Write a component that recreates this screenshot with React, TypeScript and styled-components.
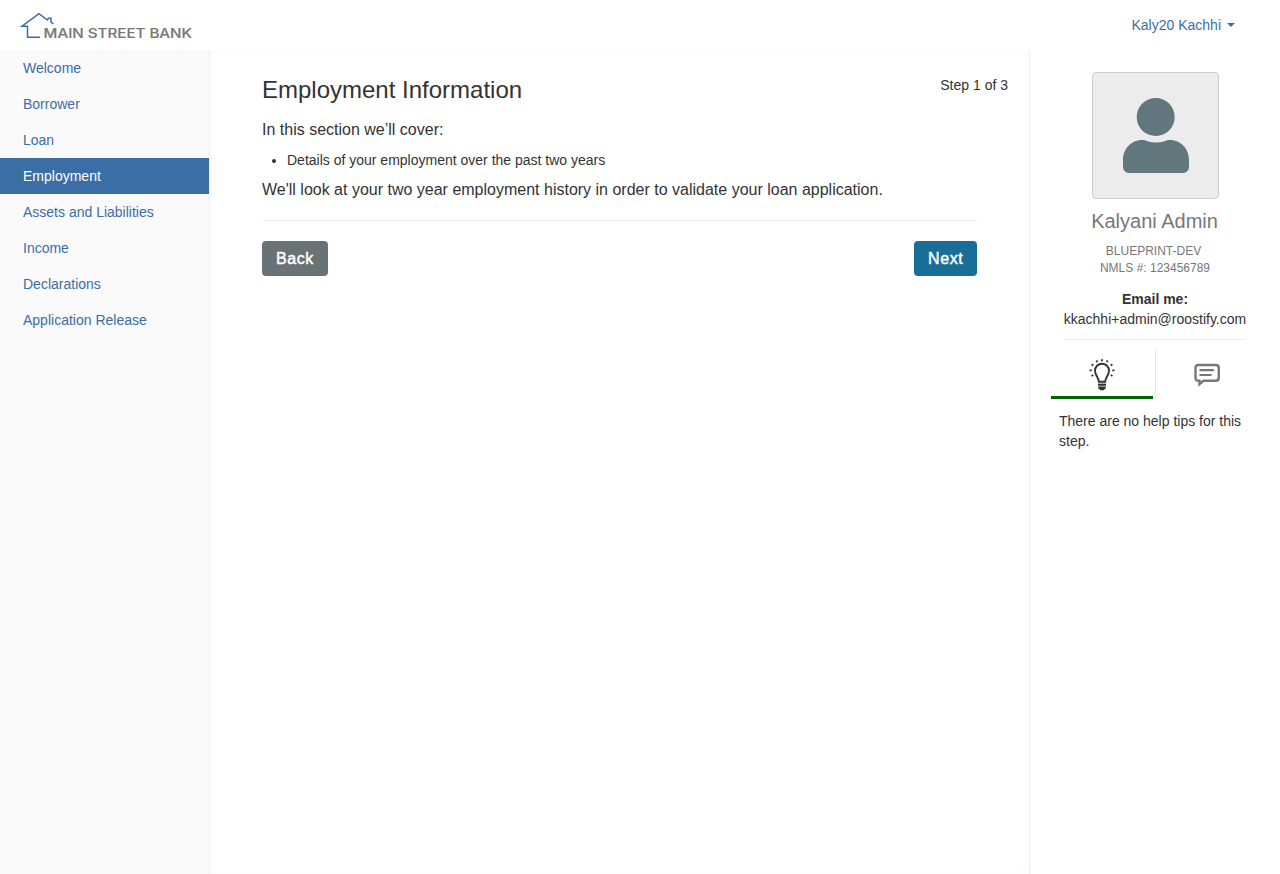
import React from "react";
import styled, { createGlobalStyle } from "styled-components";

const GlobalStyle = createGlobalStyle`
  *, *::before, *::after { box-sizing: border-box; }
  body {
    margin: 0;
    background: #fff;
    color: #333;
    font: 14px/20px "Liberation Sans", Arial, sans-serif;
    overflow: hidden;
  }
`;

const Page = styled.div`
  display: flex;
  flex-direction: column;
  height: 100vh;
`;

const Header = styled.header`
  display: flex;
  justify-content: space-between;
  height: 50px;
  padding: 0 45px 0 20px;
`;

const Logo = styled.svg`
  display: block;
  margin-top: 10px;
`;

const UserMenu = styled.a`
  display: flex;
  align-items: center;
  gap: 6px;
  height: 50px;
  color: #3a6ea5;
`;

const Caret = styled.span`
  border-top: 4px solid currentColor;
  border-left: 4px solid transparent;
  border-right: 4px solid transparent;
`;

const Columns = styled.div`
  display: flex;
  flex: 1;
`;

const Sidebar = styled.nav`
  width: 210px;
  background: #fafafa;
  border-right: 1px solid #eee;
`;

const NavItem = styled.a<{ $active?: boolean }>`
  display: block;
  padding: 8px 23px;
  color: ${(p) => (p.$active ? "#fff" : "#3a6ea5")};
  background: ${(p) => (p.$active ? "#3a6ea5" : "transparent")};
`;

const Main = styled.main`
  flex: 1;
  padding: 25px 21px 0 52px;
  box-shadow: inset 0 0 15px rgba(0, 0, 0, 0.015);
`;

const TitleRow = styled.div`
  display: flex;
  justify-content: space-between;
`;

const Title = styled.h1`
  margin: 0;
  font-size: 24px;
  font-weight: 400;
  line-height: 30px;
`;

const Lead = styled.p`
  margin: 0;
  font-size: 16px;
  line-height: 20px;
`;

const Intro = styled(Lead)`
  margin-top: 15px;
`;

const Topics = styled.ul`
  margin: 10px 0 10px;
  padding: 0 0 0 25px;
`;

const Actions = styled.div`
  display: flex;
  justify-content: space-between;
  width: 715px;
  margin-top: 20px;
  padding-top: 20px;
  border-top: 1px solid #eee;
`;

const Button = styled.button<{ $primary?: boolean }>`
  width: ${(p) => (p.$primary ? "63px" : "66px")};
  height: 35px;
  padding: 0 0 0 14px;
  border: 0;
  border-radius: 4px;
  color: #fff;
  background: ${(p) => (p.$primary ? "#176f98" : "#677375")};
  font: 16px/35px "Liberation Sans", Arial, sans-serif;
  letter-spacing: 0.6px;
  text-align: left;
  -webkit-text-stroke: 0.45px #fff;
`;

const Aside = styled.aside`
  width: 251px;
  border-left: 1px solid #eee;
  padding: 22px 25px 0 21px;
`;

const Profile = styled.section`
  display: flex;
  flex-direction: column;
  align-items: center;
  width: 180px;
  margin: 0 0 10px 14px;
  padding-bottom: 10px;
  border-bottom: 1px solid #eee;
  white-space: nowrap;
`;

const Avatar = styled.div`
  width: 127px;
  height: 127px;
  border: 1px solid #ccc;
  border-radius: 4px;
  background: #ececec;
`;

const Name = styled.h2`
  margin: 9px 0 9px;
  padding-right: 1px;
  color: #777;
  font-size: 20px;
  font-weight: 400;
  line-height: 26px;
`;

const Detail = styled.div<{ $nudge?: boolean }>`
  color: #777;
  font-size: 12px;
  line-height: 17px;
  padding-right: ${(p) => (p.$nudge ? "3px" : "0")};
`;

const EmailLabel = styled.strong`
  margin-top: 12px;
`;

const Tabs = styled.div`
  display: flex;
  height: 49px;
`;

const Tab = styled.div<{ $active?: boolean }>`
  display: flex;
  flex: none;
  justify-content: center;
  width: 102px;
  border-bottom: ${(p) => (p.$active ? "3px solid #006400" : "0")};
`;

const Divider = styled.div`
  flex: none;
  width: 1px;
  height: 48px;
  margin-left: 2px;
  background: #e5e5e5;
`;

const TabIcon = styled.svg<{ $top: number }>`
  flex: none;
  margin-top: ${(p) => p.$top}px;
`;

const Tip = styled.p`
  margin: 12px 0 0 8px;
  width: 190px;
`;

const steps = [
  "Welcome",
  "Borrower",
  "Loan",
  "Employment",
  "Assets and Liabilities",
  "Income",
  "Declarations",
  "Application Release",
];

function BankLogo() {
  return (
    <Logo width="176" height="32" viewBox="0 0 176 32">
      <path
        d="M20 27.2H7.5V16.2H2L19 3.7L27.3 10L28.4 8.3H31V12.2L33.4 13.8"
        fill="none"
        stroke="#3a6ea5"
        strokeWidth="1.5"
      />
      <text
        x="23.6"
        y="28"
        fill="#777"
        stroke="#777"
        strokeWidth="0.15"
        fontFamily="Inter, 'Liberation Sans', sans-serif"
        fontSize="12.5"
        fontWeight="500"
        textLength="148.4"
        lengthAdjust="spacingAndGlyphs"
      >
        MAIN STREET BANK
      </text>
    </Logo>
  );
}

function PersonIcon() {
  return (
    <svg width="125" height="125" viewBox="0 0 125 125" fill="#62777d">
      <circle cx="62.7" cy="44" r="19" />
      <path d="M49 67C51 67 52.5 67.3 54.5 68.2C60 69.9 66 69.9 71.5 68.2C73.5 67.3 75 67 77 67C88 67 96 76 96 87V93.5C96 97.5 93.3 100 89.5 100H36.5C32.7 100 30 97.5 30 93.5V87C30 76 38 67 49 67Z" />
    </svg>
  );
}

function BulbIcon() {
  return (
    <TabIcon $top={8} width="28" height="34" viewBox="0 0 28 34" fill="none" stroke="#333">
      <path
        d="M10.8 23.8C10.8 19.5 7 17.5 7 12.7C7 8.8 10.1 5.7 14 5.7S21 8.8 21 12.7C21 17.5 17.2 19.5 17.2 23.8Z"
        strokeWidth="1.9"
      />
      <path d="M10 26.7H18" strokeWidth="2.2" />
      <path d="M10 28.6H18L17.5 30.4L15.6 32.2H12.4L10.5 30.4Z" fill="#333" stroke="none" />
      <path
        d="M14 1.2V3.2M8.3 2.4L9.3 4.1M19.7 2.4L18.7 4.1M3.6 6.4L5.3 7.5M24.4 6.4L22.7 7.5M1.5 12.4H3.7M26.5 12.4H24.3M3.5 18L5.3 17M24.5 18L22.7 17"
        strokeWidth="1.9"
      />
    </TabIcon>
  );
}

function ChatIcon() {
  return (
    <TabIcon $top={13} width="28" height="26" viewBox="0 0 28 26" fill="none" stroke="#777">
      <path
        d="M5.5 2H22.8C24.8 2 25.8 3 25.8 5V14.8C25.8 16.8 24.8 17.8 22.8 17.8H10.4L6.5 21.2V17.8H5.5C3.5 17.8 2.5 16.8 2.5 14.8V5C2.5 3 3.5 2 5.5 2Z"
        strokeWidth="2.4"
      />
      <path d="M7.3 7.1H20.2M7.3 12H17.8" strokeWidth="2.2" strokeLinecap="round" />
    </TabIcon>
  );
}

export default function App() {
  return (
    <Page>
      <GlobalStyle />
      <Header>
        <BankLogo />
        <UserMenu>
          Kaly20 Kachhi <Caret />
        </UserMenu>
      </Header>
      <Columns>
        <Sidebar>
          {steps.map((step) => (
            <NavItem key={step} $active={step === "Employment"}>
              {step}
            </NavItem>
          ))}
        </Sidebar>
        <Main>
          <TitleRow>
            <Title>Employment Information</Title>
            <span>Step 1 of 3</span>
          </TitleRow>
          <Intro>In this section we’ll cover:</Intro>
          <Topics>
            <li>Details of your employment over the past two years</li>
          </Topics>
          <Lead>We'll look at your two year employment history in order to validate your loan application.</Lead>
          <Actions>
            <Button>Back</Button>
            <Button $primary>Next</Button>
          </Actions>
        </Main>
        <Aside>
          <Profile>
            <Avatar>
              <PersonIcon />
            </Avatar>
            <Name>Kalyani Admin</Name>
            <Detail $nudge>BLUEPRINT-DEV</Detail>
            <Detail>NMLS #: 123456789</Detail>
            <EmailLabel>Email me:</EmailLabel>
            <span>kkachhi+admin@roostify.com</span>
          </Profile>
          <Tabs>
            <Tab $active>
              <BulbIcon />
            </Tab>
            <Divider />
            <Tab>
              <ChatIcon />
            </Tab>
          </Tabs>
          <Tip>There are no help tips for this step.</Tip>
        </Aside>
      </Columns>
    </Page>
  );
}
